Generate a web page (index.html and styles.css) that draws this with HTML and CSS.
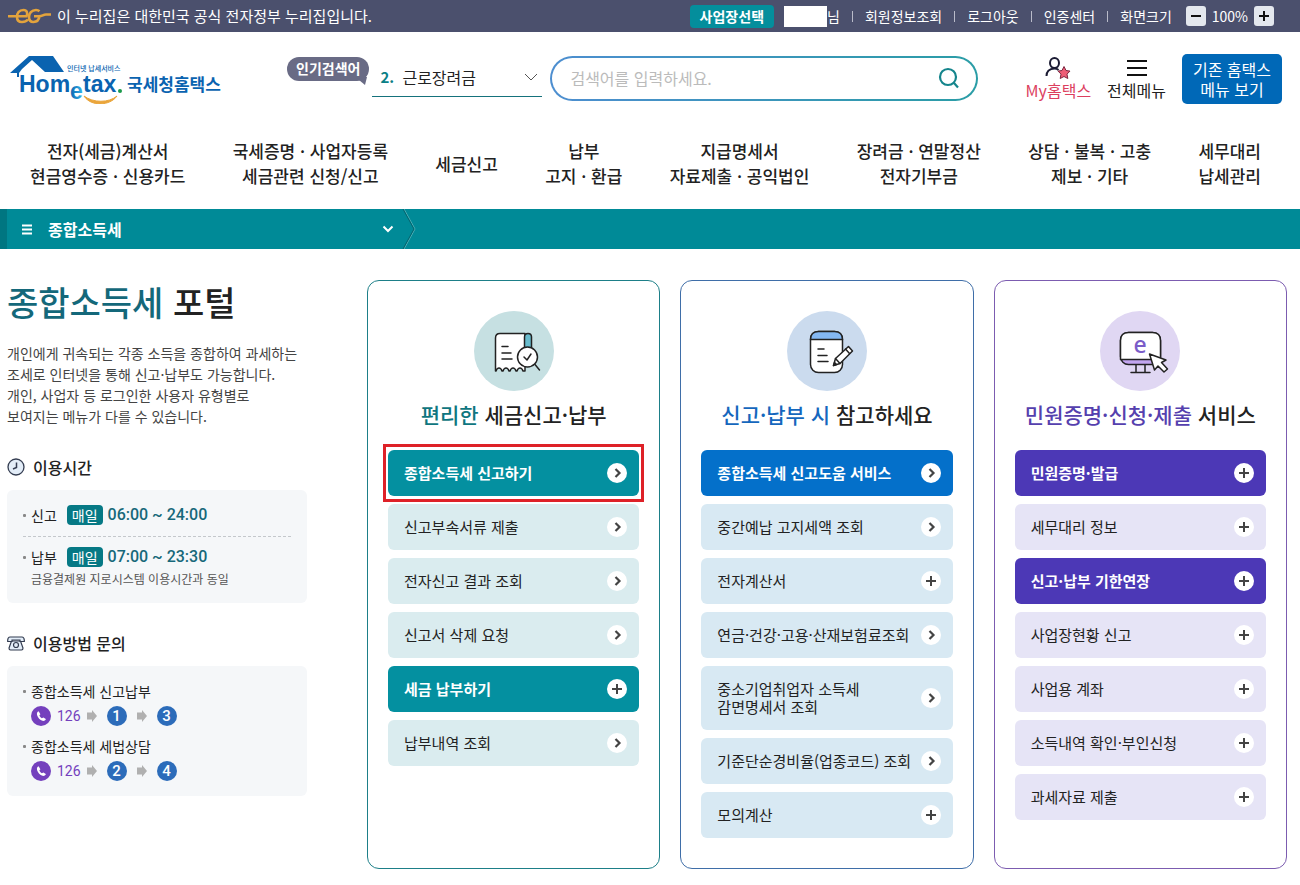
FILE: index.html
```html
<!DOCTYPE html>
<html lang="ko">
<head>
<meta charset="utf-8">
<meta name="viewport" content="width=device-width, initial-scale=1">
<title>국세청홈택스 - 종합소득세 포털</title>
<link rel="stylesheet" href="styles.css">
</head>
<body>
<svg class="sprite" aria-hidden="true">
  <symbol id="arrow" viewBox="0 0 20 20"><circle cx="10" cy="10" r="10" fill="#fff"/><path d="M8.500 6l4 4-4 4" fill="none" stroke="#444" stroke-width="2.200"/></symbol>
  <symbol id="plus" viewBox="0 0 20 20"><circle cx="10" cy="10" r="10" fill="#fff"/><path d="M10 5v10M5 10h10" fill="none" stroke="#444" stroke-width="2"/></symbol>
  <symbol id="next" viewBox="0 0 10 12"><path d="M0 2.500h5V0l5 6-5 6V9.500H0z" fill="#b0b0b0"/></symbol>
  <symbol id="phone" viewBox="0 0 20 20"><circle cx="10" cy="10" r="10" fill="#7440bd"/><path d="M7.600 5.200C5.600 6 5.400 8.200 6.800 10.800c1.600 2.900 4.300 4.700 6.600 4 .9-.4 1.400-1.100 1.400-1.700l-2.400-1.700-1.500.9c-1.200-.5-2.200-1.700-2.500-3l1-1z" fill="#fff"/></symbol>
</svg>

<div class="topbar">
  <p class="gov">
    <svg class="gov-mark" width="43" height="16" viewBox="0 0 43 16" fill="none" stroke="#e3a33c" stroke-width="2.600"><path d="M0 8.300h18.500C20 5 19 2 15.500 2 11 2 9 5.500 9 9c0 3.500 2 5 5 5 2.500 0 4.500-.7 6-2.500"/><path d="M31.500 3.200C30.500 2.300 29.300 2 28 2c-4.500 0-7 3.500-7 7 0 3.300 2 5 4.500 5 3.500 0 5.500-2.500 6-5.700H26M31 8.300c3.500 0 4-1.800 7-1.800h5"/></svg>
    이 누리집은 대한민국 공식 전자정부 누리집입니다.
  </p>
  <div class="utils">
    <button class="site-select" type="button">사업장선택</button>
    <span class="user"><span class="user-name"></span>님</span>
    <a href="#">회원정보조회</a>
    <a href="#">로그아웃</a>
    <a href="#">인증센터</a>
    <span class="size-label">화면크기</span>
    <span class="zoom">
      <button class="zoom-btn" type="button" aria-label="축소"><svg width="12" height="12" viewBox="0 0 12 12"><path d="M1 6h10" stroke="#111" stroke-width="2"/></svg></button>
      <span>100%</span>
      <button class="zoom-btn" type="button" aria-label="확대"><svg width="12" height="12" viewBox="0 0 12 12"><path d="M1 6h10M6 1v10" stroke="#111" stroke-width="2"/></svg></button>
    </span>
  </div>
</div>

<header class="header">
  <a class="logo" href="#" aria-label="국세청홈택스">
    <svg width="212" height="50" viewBox="0 0 212 50">
      <defs><linearGradient id="e-fill" x1="0" x2="1"><stop offset="0" stop-color="#0a63b0"/><stop offset="1" stop-color="#35b6ea"/></linearGradient></defs>
      <path d="M0 19L19 2h24l11 16H35L22 6 12 15l-3 4v4H7v-4z" fill="#0a63b0"/>
      <text class="logo-tag" x="57" y="17">인터넷 납세서비스</text>
      <text class="logo-word" x="9" y="38">Hom</text>
      <text class="logo-e" x="60" y="45">e</text>
      <text class="logo-word" x="73" y="38">tax</text>
      <circle cx="110" cy="37" r="2" fill="#1b9a4b"/>
      <path d="M74 42c9 7 25 7 33 0-7 10-26 11-33 0z" fill="#eaa53b" stroke="#eaa53b"/>
      <text class="logo-ko" x="117" y="37">국세청홈택스</text>
    </svg>
  </a>
  <div class="popular">
    <span class="bubble">인기검색어
      <svg class="bubble-tail" width="10" height="8" viewBox="0 0 10 8"><path d="M0 0h10L8 8 2 3z" fill="#696b85"/></svg>
    </span>
    <div class="keyword">
      <label for="keyword">2.</label>
      <select id="keyword"><option>근로장려금</option></select>
      <svg class="keyword-arrow" width="14" height="8" viewBox="0 0 14 8"><path d="M1 1l6 6 6-6" fill="none" stroke="#555"/></svg>
    </div>
  </div>
  <form class="search">
    <input type="text" placeholder="검색어를 입력하세요." aria-label="검색어">
    <button class="search-btn" type="button" aria-label="검색"><svg width="22" height="22" viewBox="0 0 22 22" fill="none" stroke="#15858c" stroke-width="2.200"><circle cx="10" cy="10" r="8"/><path d="M16 16l4 4.500"/></svg></button>
  </form>
  <div class="quick">
    <a class="quick-link my" href="#">
      <svg width="27" height="22" viewBox="0 0 27 22"><g fill="none" stroke="#1b1b33" stroke-width="2"><ellipse cx="9.500" cy="6" rx="4.500" ry="5"/><path d="M1.500 19c0-4 2.500-7.500 8-7.500 1.500 0 3 .5 4 1.500"/></g><path d="M19 9.500l2 4 4 .6-3 3 .8 4.400-3.800-2-3.800 2 .8-4.400-3-3 4-.6z" fill="#ee5d76" stroke="#7d2740"/></svg>
      My홈택스
    </a>
    <a class="quick-link" href="#">
      <svg width="20" height="22" viewBox="0 0 20 22"><path d="M0 4h20M0 11h20M0 18h20" stroke="#111" stroke-width="2"/></svg>
      전체메뉴
    </a>
    <button class="old-menu" type="button">기존 홈택스<br>메뉴 보기</button>
  </div>
</header>

<nav class="gnb">
  <a href="#">전자(세금)계산서<br>현금영수증 · 신용카드</a>
  <a href="#">국세증명 · 사업자등록<br>세금관련 신청/신고</a>
  <a href="#">세금신고</a>
  <a href="#">납부<br>고지 · 환급</a>
  <a href="#">지급명세서<br>자료제출 · 공익법인</a>
  <a href="#">장려금 · 연말정산<br>전자기부금</a>
  <a href="#">상담 · 불복 · 고충<br>제보 · 기타</a>
  <a href="#">세무대리<br>납세관리</a>
</nav>

<div class="pathbar">
  <button class="path-menu" type="button">
    <svg width="10" height="11" viewBox="0 0 10 11"><path d="M0 1.500h10M0 5.500h10M0 9.500h10" stroke="#fff" stroke-width="2"/></svg>
    <span>종합소득세</span>
    <svg class="path-down" width="12" height="8" viewBox="0 0 12 8"><path d="M1.500 1.500L6 6l4.500-4.500" fill="none" stroke="#fff" stroke-width="2"/></svg>
  </button>
  <svg width="14" height="40" viewBox="0 0 14 40" fill="none"><path d="M2 0l11 20L2 40" stroke="#4fb0b6"/><path d="M1 0l11 20L1 40" stroke="#06646d"/></svg>
</div>

<main class="main">
  <aside class="side">
    <h1 class="title"><em>종합소득세</em> 포털</h1>
    <p class="intro">개인에게 귀속되는 각종 소득을 종합하여 과세하는<br>조세로 인터넷을 통해 신고·납부도 가능합니다.<br>개인, 사업자 등 로그인한 사용자 유형별로<br>보여지는 메뉴가 다를 수 있습니다.</p>
    <h2 class="side-title">
      <svg width="18" height="18" viewBox="0 0 18 18" fill="none" stroke="#333c50"><circle cx="9" cy="9" r="8" fill="#e3edf8" stroke-width="1.300"/><path d="M9.500 4.500v5L6 11" stroke-width="1.500"/></svg>
      이용시간
    </h2>
    <div class="box hours">
      <div class="hour first"><span class="bullet">신고</span><span class="badge">매일</span><strong>06:00 ~ 24:00</strong></div>
      <div class="hour"><span class="bullet">납부</span><span class="badge">매일</span><strong>07:00 ~ 23:30</strong></div>
      <p class="note">금융결제원 지로시스템 이용시간과 동일</p>
    </div>
    <h2 class="side-title">
      <svg width="18" height="15" viewBox="0 0 18 15" fill="#e3edf8" stroke="#333c50" stroke-width="1.200"><path d="M4.500 5L2 12q0 2 1.500 2h11q1.500 0 1.500-2L13.500 5z"/><path d="M3 1h12q2 0 2.300 3v1.500H13V4H5v1.500H.7V4Q1 1 3 1z"/><circle cx="9" cy="9" r="2.500"/></svg>
      이용방법 문의
    </h2>
    <div class="box calls">
      <span class="bullet">종합소득세 신고납부</span>
      <div class="steps"><svg class="dot"><use href="#phone"/></svg><span class="tel">126</span><svg class="next"><use href="#next"/></svg><b>1</b><svg class="next"><use href="#next"/></svg><b>3</b></div>
      <span class="bullet">종합소득세 세법상담</span>
      <div class="steps"><svg class="dot"><use href="#phone"/></svg><span class="tel">126</span><svg class="next"><use href="#next"/></svg><b>2</b><svg class="next"><use href="#next"/></svg><b>4</b></div>
    </div>
  </aside>

  <section class="card teal">
    <svg class="card-icon" width="80" height="80" viewBox="0 0 80 80"><circle cx="40" cy="40" r="40" fill="#c6e0e2"/><g stroke="#222" stroke-width="1.500" stroke-linecap="round" stroke-linejoin="round"><path d="M21.500 60V27q0-4.500 4.500-4.500h25V60h-2q-1-3-3-3t-3 3h-1q-1-3-3-3t-3 3h-1q-1-3-3-3t-3 3h-1q-1-3-3-3t-3 3z" fill="#fff"/><path d="M50.500 38V26q0-3.500 3.500-3.500t3.500 3.500v12z" fill="#69bccd"/><path d="M28 35.500h6M28 42h9M28 48h10" fill="none"/><circle cx="53.500" cy="46" r="10" fill="#fff"/><path d="M50 46l3 3 4-6M61 53.500l4.500 5.500" fill="none"/></g></svg>
    <h2 class="card-title"><em>편리한</em> 세금신고·납부</h2>
    <ul class="menu">
      <li class="marked"><a class="item on" href="#">종합소득세 신고하기<svg class="dot"><use href="#arrow"/></svg></a></li>
      <li><a class="item" href="#">신고부속서류 제출<svg class="dot"><use href="#arrow"/></svg></a></li>
      <li><a class="item" href="#">전자신고 결과 조회<svg class="dot"><use href="#arrow"/></svg></a></li>
      <li><a class="item" href="#">신고서 삭제 요청<svg class="dot"><use href="#arrow"/></svg></a></li>
      <li><a class="item on" href="#">세금 납부하기<svg class="dot"><use href="#plus"/></svg></a></li>
      <li><a class="item" href="#">납부내역 조회<svg class="dot"><use href="#arrow"/></svg></a></li>
    </ul>
  </section>

  <section class="card blue">
    <svg class="card-icon" width="80" height="80" viewBox="0 0 80 80"><circle cx="40" cy="40" r="40" fill="#cbdbee"/><g stroke="#222" stroke-width="1.500" stroke-linecap="round" stroke-linejoin="round"><rect x="23.500" y="20.500" width="32" height="41" rx="8" fill="#fff"/><path d="M23.500 28.500q0-8 8-8h16q8 0 8 8z" fill="#84b8f3"/><path d="M31 38h6M31 44.500h9M31 50.500h10" fill="none"/><path d="M46.500 54.500l2-7 13-12 4 4.500-12.500 12.500z" fill="#fff"/><path d="M48.500 47.500l4.500 5M58.500 38l4 4.500" fill="none"/><path d="M46.500 54.500l1-3 2 2z" fill="#222"/></g></svg>
    <h2 class="card-title"><em>신고·납부 시</em> 참고하세요</h2>
    <ul class="menu">
      <li><a class="item on" href="#">종합소득세 신고도움 서비스<svg class="dot"><use href="#arrow"/></svg></a></li>
      <li><a class="item" href="#">중간예납 고지세액 조회<svg class="dot"><use href="#arrow"/></svg></a></li>
      <li><a class="item" href="#">전자계산서<svg class="dot"><use href="#plus"/></svg></a></li>
      <li><a class="item" href="#">연금·건강·고용·산재보험료조회<svg class="dot"><use href="#arrow"/></svg></a></li>
      <li><a class="item tall" href="#"><span>중소기업취업자 소득세<br>감면명세서 조회</span><svg class="dot"><use href="#arrow"/></svg></a></li>
      <li><a class="item" href="#">기준단순경비율(업종코드) 조회<svg class="dot"><use href="#arrow"/></svg></a></li>
      <li><a class="item" href="#">모의계산<svg class="dot"><use href="#plus"/></svg></a></li>
    </ul>
  </section>

  <section class="card purple">
    <svg class="card-icon" width="80" height="80" viewBox="0 0 80 80"><circle cx="40" cy="40" r="40" fill="#e0d7f3"/><g stroke="#222" stroke-width="1.500" stroke-linecap="round" stroke-linejoin="round"><path d="M36 54v7M45 54v7M31 61.500h19" fill="none"/><rect x="20.500" y="21.500" width="40" height="32" rx="8" fill="#c3a6f0"/><path d="M20.500 48.500v-19q0-8 8-8h24q8 0 8 8v19z" fill="#fff"/></g><text class="icon-e" x="40" y="42" text-anchor="middle">e</text><path d="M49.500 43l5 16 3.500-4 6 6 3.500-3-6-6.500 4.500-2.500z" fill="#fff" stroke="#222" stroke-width="1.500" stroke-linejoin="round"/></svg>
    <h2 class="card-title"><em>민원증명·신청·제출</em> 서비스</h2>
    <ul class="menu">
      <li><a class="item on" href="#">민원증명·발급<svg class="dot"><use href="#plus"/></svg></a></li>
      <li><a class="item" href="#">세무대리 정보<svg class="dot"><use href="#plus"/></svg></a></li>
      <li><a class="item on" href="#">신고·납부 기한연장<svg class="dot"><use href="#plus"/></svg></a></li>
      <li><a class="item" href="#">사업장현황 신고<svg class="dot"><use href="#plus"/></svg></a></li>
      <li><a class="item" href="#">사업용 계좌<svg class="dot"><use href="#plus"/></svg></a></li>
      <li><a class="item" href="#">소득내역 확인·부인신청<svg class="dot"><use href="#plus"/></svg></a></li>
      <li><a class="item" href="#">과세자료 제출<svg class="dot"><use href="#plus"/></svg></a></li>
    </ul>
  </section>
</main>
</body>
</html>
```

FILE: styles.css
```css
* { box-sizing: border-box; margin: 0; padding: 0; }
body {
  background: #fff;
  color: #222;
  font-family: "Noto Sans CJK KR", sans-serif;
  font-size: 15px;
  line-height: 20px;
}
a { color: inherit; text-decoration: none; }
button, input, select { font: inherit; color: inherit; border: 0; background: none; }
svg { display: block; flex: none; }
ul { list-style: none; }
em { font-style: normal; }
.sprite { position: absolute; width: 0; height: 0; }

/* top bar */
.topbar {
  display: flex;
  justify-content: space-between;
  align-items: center;
  height: 32px;
  padding: 0 26px 0 8px;
  background: #4b506d;
  color: #fff;
}
.gov { display: flex; align-items: center; gap: 6px; }
.utils { display: flex; align-items: center; font-size: 14px; }
.site-select {
  height: 23px;
  padding: 0 10px;
  margin-right: 10px;
  border-radius: 4px;
  background: #048e9c;
  font-weight: 700;
  line-height: 20px;
}
.user { display: flex; align-items: center; }
.user-name { width: 43px; height: 21px; background: #fff; }
.utils > a, .size-label { display: flex; align-items: center; }
.utils > a::before, .size-label::before {
  content: "";
  width: 1px;
  height: 11px;
  margin: 0 12px;
  background: #b9bbc9;
}
.zoom { display: flex; align-items: center; gap: 6px; margin-left: 14px; }
.zoom-btn {
  display: grid;
  place-items: center;
  width: 20px;
  height: 20px;
  border-radius: 3px;
  background: #e4e8ee;
}

/* header */
.header {
  display: flex;
  align-items: center;
  padding: 22px 18px 0 10px;
}
.logo-tag { font-size: 7px; font-weight: 500; fill: #0a63b0; }
.logo-word { font: 700 23px "Liberation Sans", sans-serif; fill: #0a63b0; }
.logo-e { font: 700 23px "Liberation Sans", sans-serif; fill: url(#e-fill); }
.logo-ko { font-size: 17px; font-weight: 700; fill: #0a63b0; }
.popular { display: flex; align-items: flex-start; margin: 0 0 4px 65px; gap: 3px; }
.bubble {
  position: relative;
  height: 24px;
  padding: 0 9px;
  border-radius: 12px;
  background: #696b85;
  color: #fff;
  font-size: 14px;
  font-weight: 700;
  line-height: 23px;
  white-space: nowrap;
}
.bubble-tail { position: absolute; right: 2px; bottom: -4px; }
.keyword {
  display: flex;
  align-items: center;
  width: 170px;
  height: 40px;
  padding: 0 4px 0 8px;
  border-bottom: 1px solid #15727c;
}
.keyword label { width: 22px; color: #0b7f86; font-weight: 700; }
.keyword select { flex: 1; appearance: none; font-size: 16px; }
.search {
  display: flex;
  align-items: center;
  flex: 1;
  height: 45px;
  margin: 0 48px 2px 8px;
  padding: 0 16px 0 18px;
  border: 2px solid transparent;
  border-radius: 23px;
  background: linear-gradient(#fff, #fff) padding-box, linear-gradient(90deg, #4d8ed0, #2a9da6) border-box;
}
.search input { flex: 1; min-width: 0; outline: 0; font-size: 16px; }
.search input::placeholder { color: #bbb; }
.quick { display: flex; align-items: center; gap: 16px; }
.quick-link {
  display: flex;
  flex-direction: column;
  align-items: center;
  font-size: 16px;
  line-height: 22px;
}
.quick-link.my { color: #dc3f5f; }
.old-menu {
  width: 100px;
  height: 50px;
  border-radius: 5px;
  background: #0068b7;
  color: #fff;
  font-size: 16px;
  line-height: 20px;
}

/* main navigation */
.gnb {
  display: flex;
  justify-content: space-between;
  align-items: center;
  padding: 34px 39px 21px 30px;
  font-size: 17px;
  font-weight: 500;
  line-height: 25px;
  text-align: center;
}

/* current section */
.pathbar {
  display: flex;
  height: 40px;
  border-left: 7px solid #007681;
  background: #008a97;
}
.path-menu {
  display: flex;
  align-items: center;
  gap: 16px;
  width: 395px;
  padding: 0 8px 0 15px;
  color: #fff;
  font-size: 16px;
  font-weight: 700;
}
.path-down { margin-left: auto; }

/* content */
.main {
  display: flex;
  gap: 20px;
  padding: 31px 13px 16px 7px;
}
.side { flex: none; width: 300px; margin-right: 40px; }
.title { font-size: 34px; font-weight: 500; line-height: 44px; }
.title em { color: #14687a; }
.intro { margin-top: 19px; color: #444; font-size: 14px; line-height: 21px; white-space: nowrap; }
.side-title {
  display: flex;
  align-items: center;
  gap: 8px;
  margin: 29px 0 12px;
  font-size: 16px;
  font-weight: 500;
  line-height: 22px;
}
.box { border-radius: 6px; background: #f5f7f9; padding: 15px 16px; font-size: 14px; }
.box.hours { padding-top: 12px; }
.bullet { display: flex; align-items: center; gap: 5px; }
.bullet::before { content: ""; width: 3px; height: 3px; border-radius: 1px; background: #888; }
.hour { display: flex; align-items: center; height: 26px; }
.hour.first { height: 35px; margin-bottom: 7px; padding-bottom: 8px; border-bottom: 1px dashed #c4c8cc; }
.badge {
  margin: 0 5px 0 10px;
  padding: 0 5px;
  border-radius: 4px;
  background: #067985;
  color: #fff;
}
.hour strong { color: #17687a; font: 500 16px/26px Roboto, sans-serif; }
.note { padding-left: 8px; color: #555; font-size: 12px; line-height: 18px; white-space: nowrap; }
.steps { display: flex; align-items: center; margin: 5px 0 10px 8px; }
.steps:last-child { margin-bottom: 0; }
.steps b {
  width: 20px;
  height: 20px;
  border-radius: 50%;
  background: #2c6cba;
  color: #fff;
  font: 500 15px/20px Roboto, sans-serif;
  text-align: center;
}
.tel { margin: 0 -4px 0 6px; color: #7440bd; font: 14px/20px Roboto, sans-serif; }
.next { width: 10px; height: 12px; margin: 0 10px; }
.dot { width: 20px; height: 20px; }

/* service cards */
.card {
  flex: 1;
  min-height: 589px;
  padding: 30px 20px;
  border: 1px solid;
  border-radius: 12px;
}
.card-icon { margin: 0 auto; }
.icon-e { font: 500 23px "Noto Sans", sans-serif; fill: #7a5cc8; }
.card-title {
  margin: 8px 0 21px;
  color: #222;
  font-size: 21px;
  font-weight: 500;
  line-height: 30px;
  text-align: center;
  white-space: nowrap;
}
.menu { display: grid; gap: 8px; }
.item {
  display: flex;
  align-items: center;
  justify-content: space-between;
  padding: 13px 12px 13px 16px;
  border-radius: 6px;
  color: #222;
  line-height: 18px;
  white-space: nowrap;
}
.item.tall { padding-top: 14px; padding-bottom: 14px; }
.item.on { color: #fff; font-weight: 700; }
.marked { position: relative; }
.marked::after {
  content: "";
  position: absolute;
  inset: -6px -5px;
  border: 3px solid #de2128;
  pointer-events: none;
}
.teal { border-color: #1d7f88; }
.teal em { color: #0f7680; }
.teal .item { background: #daecef; }
.teal .item.on { background: #0490a0; }
.blue { border-color: #3f6ea8; }
.blue em { color: #1567bd; }
.blue .item { background: #d8e9f3; }
.blue .item.on { background: #0470ca; }
.purple { border-color: #7c5cb0; }
.purple em { color: #5540ae; }
.purple .item { background: #e6e4f6; }
.purple .item.on { background: #4c38b6; }
```
